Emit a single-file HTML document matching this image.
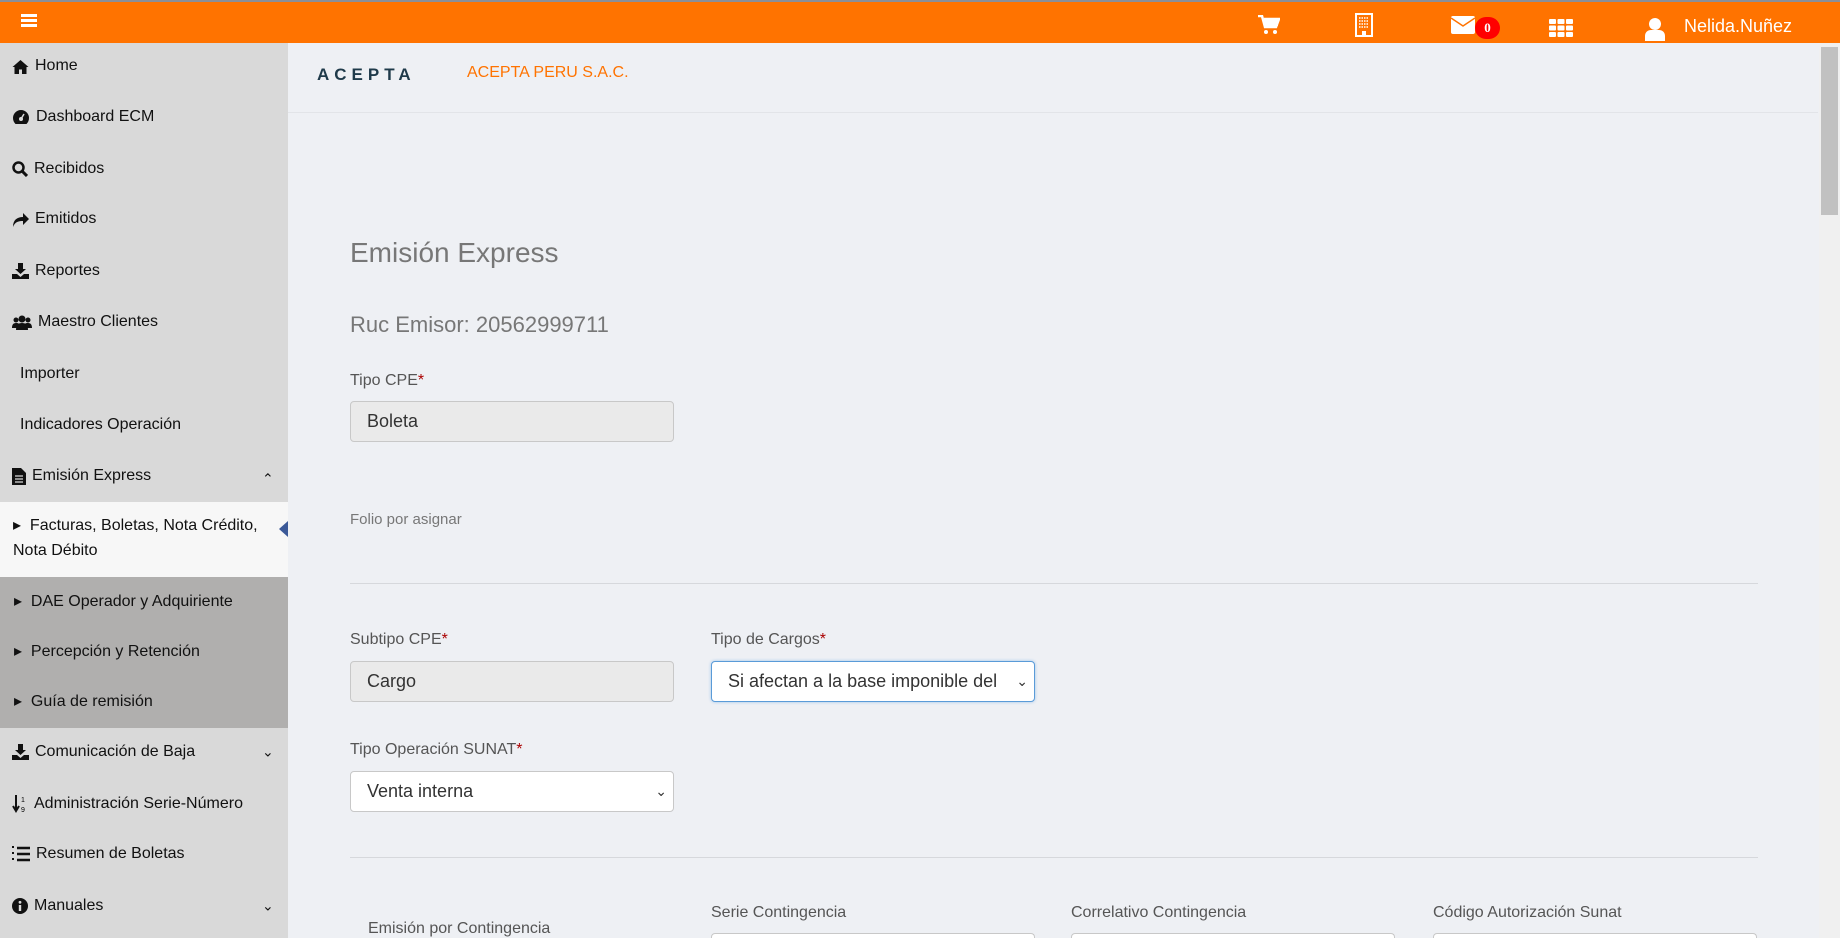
<!DOCTYPE html>
<html style="width:1840px;height:938px;overflow:hidden"><head><meta charset="utf-8"><style>
*{box-sizing:border-box;margin:0;padding:0}
body{width:1840px;height:938px;overflow:hidden;background:#eef0f4;font-family:"Liberation Sans",sans-serif;position:relative;color:#111}
.wrap{position:absolute;left:0;top:0;width:1840px;height:938px;overflow:hidden}
.top{position:absolute;left:0;top:0;width:1840px;height:43px;background:#ff7300;border-top:2px solid #8a8f99}
.side{position:absolute;left:0;top:43px;width:288px;height:895px;background:#d9d9d9}
.it{position:absolute;left:12px;font-size:16px;color:#111;display:flex;align-items:center;gap:6px;transform:translateY(-50%)}
.chev{position:absolute;left:262px;font-size:14px;transform:translateY(-50%)}
.a{position:absolute;white-space:nowrap}
.lbl{font-size:16px;color:#555}
.lbl b{color:#a00;font-weight:normal}
.inp{position:absolute;height:41px;border:1px solid #c8c8c8;border-radius:4px;background:#eaeaea;font-size:18px;color:#333;padding-left:16px;line-height:39px}
.sel{background:#fff}
.hr{position:absolute;left:350px;width:1408px;height:1px;background:#d6d8dc}
</style></head><body><div class="wrap">
<div class="top">
 <div class="a" style="left:21px;top:12px;width:16px;height:13px;border-top:3px solid #fff;border-bottom:3px solid #fff"><div style="margin-top:2px;height:3px;background:#fff"></div></div>
 <svg class="a" style="left:1258px;top:13px" width="22" height="20" viewBox="0 0 22 20"><path d="M0 1h4l3 11h11l3-8H6" fill="none" stroke="#fff" stroke-width="2.5"/><rect x="6" y="4" width="14" height="7" fill="#fff"/><circle cx="8" cy="17" r="2" fill="#fff"/><circle cx="17" cy="17" r="2" fill="#fff"/></svg>
 <svg class="a" style="left:1355px;top:11px" width="18" height="24" viewBox="0 0 18 24"><rect x="1" y="1" width="16" height="22" fill="none" stroke="#fff" stroke-width="2"/><path d="M4 5h10M4 8h10M4 11h10M4 14h10" stroke="#fff" stroke-width="1.5" stroke-dasharray="1.5 1"/><rect x="7" y="18" width="4" height="5" fill="#fff"/></svg>
 <svg class="a" style="left:1451px;top:14px" width="24" height="18" viewBox="0 0 24 18"><rect width="24" height="18" rx="2" fill="#fff"/><path d="M0 2l12 8 12-8" fill="none" stroke="#ff7300" stroke-width="1.5"/></svg>
 <div class="a" style="left:1475px;top:15px;width:25px;height:22px;border-radius:11px;background:#f00;color:#fff;font-weight:bold;font-size:13px;text-align:center;line-height:22px;font-family:'Liberation Serif',serif">0</div>
 <svg class="a" style="left:1549px;top:17px" width="24" height="18" viewBox="0 0 24 18"><g fill="#fff"><rect x="0" y="0" width="7" height="5" rx="1"/><rect x="8.5" y="0" width="7" height="5" rx="1"/><rect x="17" y="0" width="7" height="5" rx="1"/><rect x="0" y="6.5" width="7" height="5" rx="1"/><rect x="8.5" y="6.5" width="7" height="5" rx="1"/><rect x="17" y="6.5" width="7" height="5" rx="1"/><rect x="0" y="13" width="7" height="5" rx="1"/><rect x="8.5" y="13" width="7" height="5" rx="1"/><rect x="17" y="13" width="7" height="5" rx="1"/></g></svg>
 <svg class="a" style="left:1645px;top:15px" width="20" height="24" viewBox="0 0 20 24"><circle cx="10" cy="7" r="6" fill="#fff"/><path d="M0 24v-5c0-4 3-6 6-6h8c3 0 6 2 6 6v5z" fill="#fff"/></svg>
 <div class="a" style="left:1684px;top:14px;font-size:18px;color:#fff">Nelida.Nuñez</div>
</div>
<div class="side">
 <div class="it" style="top:23px"><svg width="17" height="15" viewBox="0 0 17 15"><path d="M8.5 1L0.5 8h2v7h4.5v-4.5h3V15H14.5V8h2z" fill="#111"/></svg>Home</div>
 <div class="it" style="top:74px"><svg width="18" height="16" viewBox="0 0 18 16"><path d="M9 1a8 8 0 0 0-8 8c0 2.5 1 4.5 2.5 6h11C16 13.5 17 11.5 17 9a8 8 0 0 0-8-8z" fill="#111"/><circle cx="9" cy="10" r="2" fill="#d9d9d9"/><path d="M9 10l3-5" stroke="#d9d9d9" stroke-width="1.5"/></svg>Dashboard ECM</div>
 <div class="it" style="top:126px"><svg width="16" height="16" viewBox="0 0 16 16"><circle cx="6.5" cy="6.5" r="5" fill="none" stroke="#111" stroke-width="2.5"/><path d="M10 10l5 5" stroke="#111" stroke-width="3"/></svg>Recibidos</div>
 <div class="it" style="top:176px"><svg width="17" height="15" viewBox="0 0 17 15"><path d="M1 15C1 8 5 5 11 5V1l6 6-6 6V9C6 9 3 10 1 15z" fill="#111"/></svg>Emitidos</div>
 <div class="it" style="top:228px"><svg width="17" height="16" viewBox="0 0 17 16"><path d="M6 0h5v6h3l-5.5 5L3 6h3z" fill="#111"/><path d="M0 11h5l3.5 3 3.5-3h5v5H0z" fill="#111"/></svg>Reportes</div>
 <div class="it" style="top:279px"><svg width="20" height="15" viewBox="0 0 20 15"><circle cx="10" cy="4" r="3.5" fill="#111"/><circle cx="4" cy="5" r="2.5" fill="#111"/><circle cx="16" cy="5" r="2.5" fill="#111"/><path d="M4 15c0-5 2-7 6-7s6 2 6 7z" fill="#111"/><path d="M0 13c0-3 1-5 4-5s3 1 3 1l-2 4z M20 13c0-3-1-5-4-5s-3 1-3 1l2 4z" fill="#111"/></svg>Maestro Clientes</div>
 <div class="it" style="top:331px;left:20px">Importer</div>
 <div class="it" style="top:382px;left:20px">Indicadores Operación</div>
 <div class="it" style="top:433px"><svg width="14" height="17" viewBox="0 0 14 17"><path d="M0 0h9l5 5v12H0z" fill="#111"/><path d="M3 8h8M3 11h8M3 14h8" stroke="#d9d9d9" stroke-width="1.3"/></svg>Emisión Express</div>
 <div class="chev" style="top:436px">⌃</div>
 <div class="a" style="left:0;top:459px;width:288px;height:75px;background:#f7f7f7"></div>
 <div class="a" style="left:279px;top:478px;width:0;height:0;border-top:8px solid transparent;border-bottom:8px solid transparent;border-right:9px solid #3b5998"></div>
 <div class="a" style="left:13px;top:470px;font-size:16px;line-height:25px">▸&nbsp;&nbsp;Facturas, Boletas, Nota Crédito,<br>Nota Débito</div>
 <div class="a" style="left:0;top:534px;width:288px;height:151px;background:#b0afae"></div>
 <div class="it" style="top:558px;left:14px">▸&nbsp;&nbsp;DAE Operador y Adquiriente</div>
 <div class="it" style="top:608px;left:14px">▸&nbsp;&nbsp;Percepción y Retención</div>
 <div class="it" style="top:658px;left:14px">▸&nbsp;&nbsp;Guía de remisión</div>
 <div class="it" style="top:709px"><svg width="17" height="16" viewBox="0 0 17 16"><path d="M6 0h5v6h3l-5.5 5L3 6h3z" fill="#111"/><path d="M0 11h5l3.5 3 3.5-3h5v5H0z" fill="#111"/></svg>Comunicación de Baja</div>
 <div class="chev" style="top:709px">⌄</div>
 <div class="it" style="top:761px"><svg width="16" height="18" viewBox="0 0 16 18"><path d="M4 0v14M1 11l3 5 3-5" stroke="#111" stroke-width="2" fill="none"/><text x="9" y="7" font-size="7" font-family="Liberation Sans">1</text><text x="9" y="17" font-size="7" font-family="Liberation Sans">9</text></svg>Administración Serie-Número</div>
 <div class="it" style="top:811px"><svg width="18" height="16" viewBox="0 0 18 16"><path d="M5 2h13M5 8h13M5 14h13" stroke="#111" stroke-width="2.5"/><path d="M0 1h2M0 7h2M0 13h2" stroke="#111" stroke-width="2"/></svg>Resumen de Boletas</div>
 <div class="it" style="top:863px"><svg width="16" height="16" viewBox="0 0 16 16"><circle cx="8" cy="8" r="8" fill="#111"/><rect x="6.8" y="7" width="2.4" height="6" fill="#d9d9d9"/><circle cx="8" cy="4.3" r="1.4" fill="#d9d9d9"/></svg>Manuales</div>
 <div class="chev" style="top:863px">⌄</div>
</div>
<div class="a" style="left:288px;top:112px;width:1530px;height:1px;background:#e2e4e8"></div>
<div class="a" style="left:317px;top:65px;font-size:17px;letter-spacing:5px;color:#1f3a4a;font-weight:bold">ACEPTA</div>
<div class="a" style="left:467px;top:64px;font-size:16px;color:#ff7300">ACEPTA PERU S.A.C.</div>
<div class="a" style="left:350px;top:237px;font-size:28px;color:#777">Emisión Express</div>
<div class="a" style="left:350px;top:312px;font-size:22px;color:#777">Ruc Emisor: 20562999711</div>
<div class="a lbl" style="left:350px;top:372px">Tipo CPE<b>*</b></div>
<div class="inp" style="left:350px;top:401px;width:324px">Boleta</div>
<div class="a" style="left:350px;top:511px;font-size:15px;color:#777">Folio por asignar</div>
<div class="hr" style="top:583px"></div>
<div class="a lbl" style="left:350px;top:631px">Subtipo CPE<b>*</b></div>
<div class="inp" style="left:350px;top:661px;width:324px">Cargo</div>
<div class="a lbl" style="left:711px;top:631px">Tipo de Cargos<b>*</b></div>
<div class="inp sel" style="left:711px;top:661px;width:324px;border-color:#5a9bd8;box-shadow:0 0 3px #9cc3ea;overflow:hidden;white-space:nowrap">Si afectan a la base imponible del<span class="a" style="right:6px;top:0;background:#fff;padding-left:4px;font-size:14px">⌄</span></div>
<div class="a lbl" style="left:350px;top:741px">Tipo Operación SUNAT<b>*</b></div>
<div class="inp sel" style="left:350px;top:771px;width:324px">Venta interna<span class="a" style="right:6px;top:0;font-size:14px">⌄</span></div>
<div class="hr" style="top:857px"></div>
<div class="a lbl" style="left:368px;top:920px">Emisión por Contingencia</div>
<div class="a lbl" style="left:711px;top:904px">Serie Contingencia</div>
<div class="a lbl" style="left:1071px;top:904px">Correlativo Contingencia</div>
<div class="a lbl" style="left:1433px;top:904px">Código Autorización Sunat</div>
<div class="inp sel" style="left:711px;top:933px;width:324px;height:5px;border-bottom:none;border-radius:4px 4px 0 0"></div>
<div class="inp sel" style="left:1071px;top:933px;width:324px;height:5px;border-bottom:none;border-radius:4px 4px 0 0"></div>
<div class="inp sel" style="left:1433px;top:933px;width:324px;height:5px;border-bottom:none;border-radius:4px 4px 0 0"></div>
<div class="a" style="left:1819px;top:43px;width:21px;height:895px;background:#f0f0f0"></div>
<div class="a" style="left:1821px;top:47px;width:17px;height:168px;background:#c1c1c1"></div>
</div></body></html>
